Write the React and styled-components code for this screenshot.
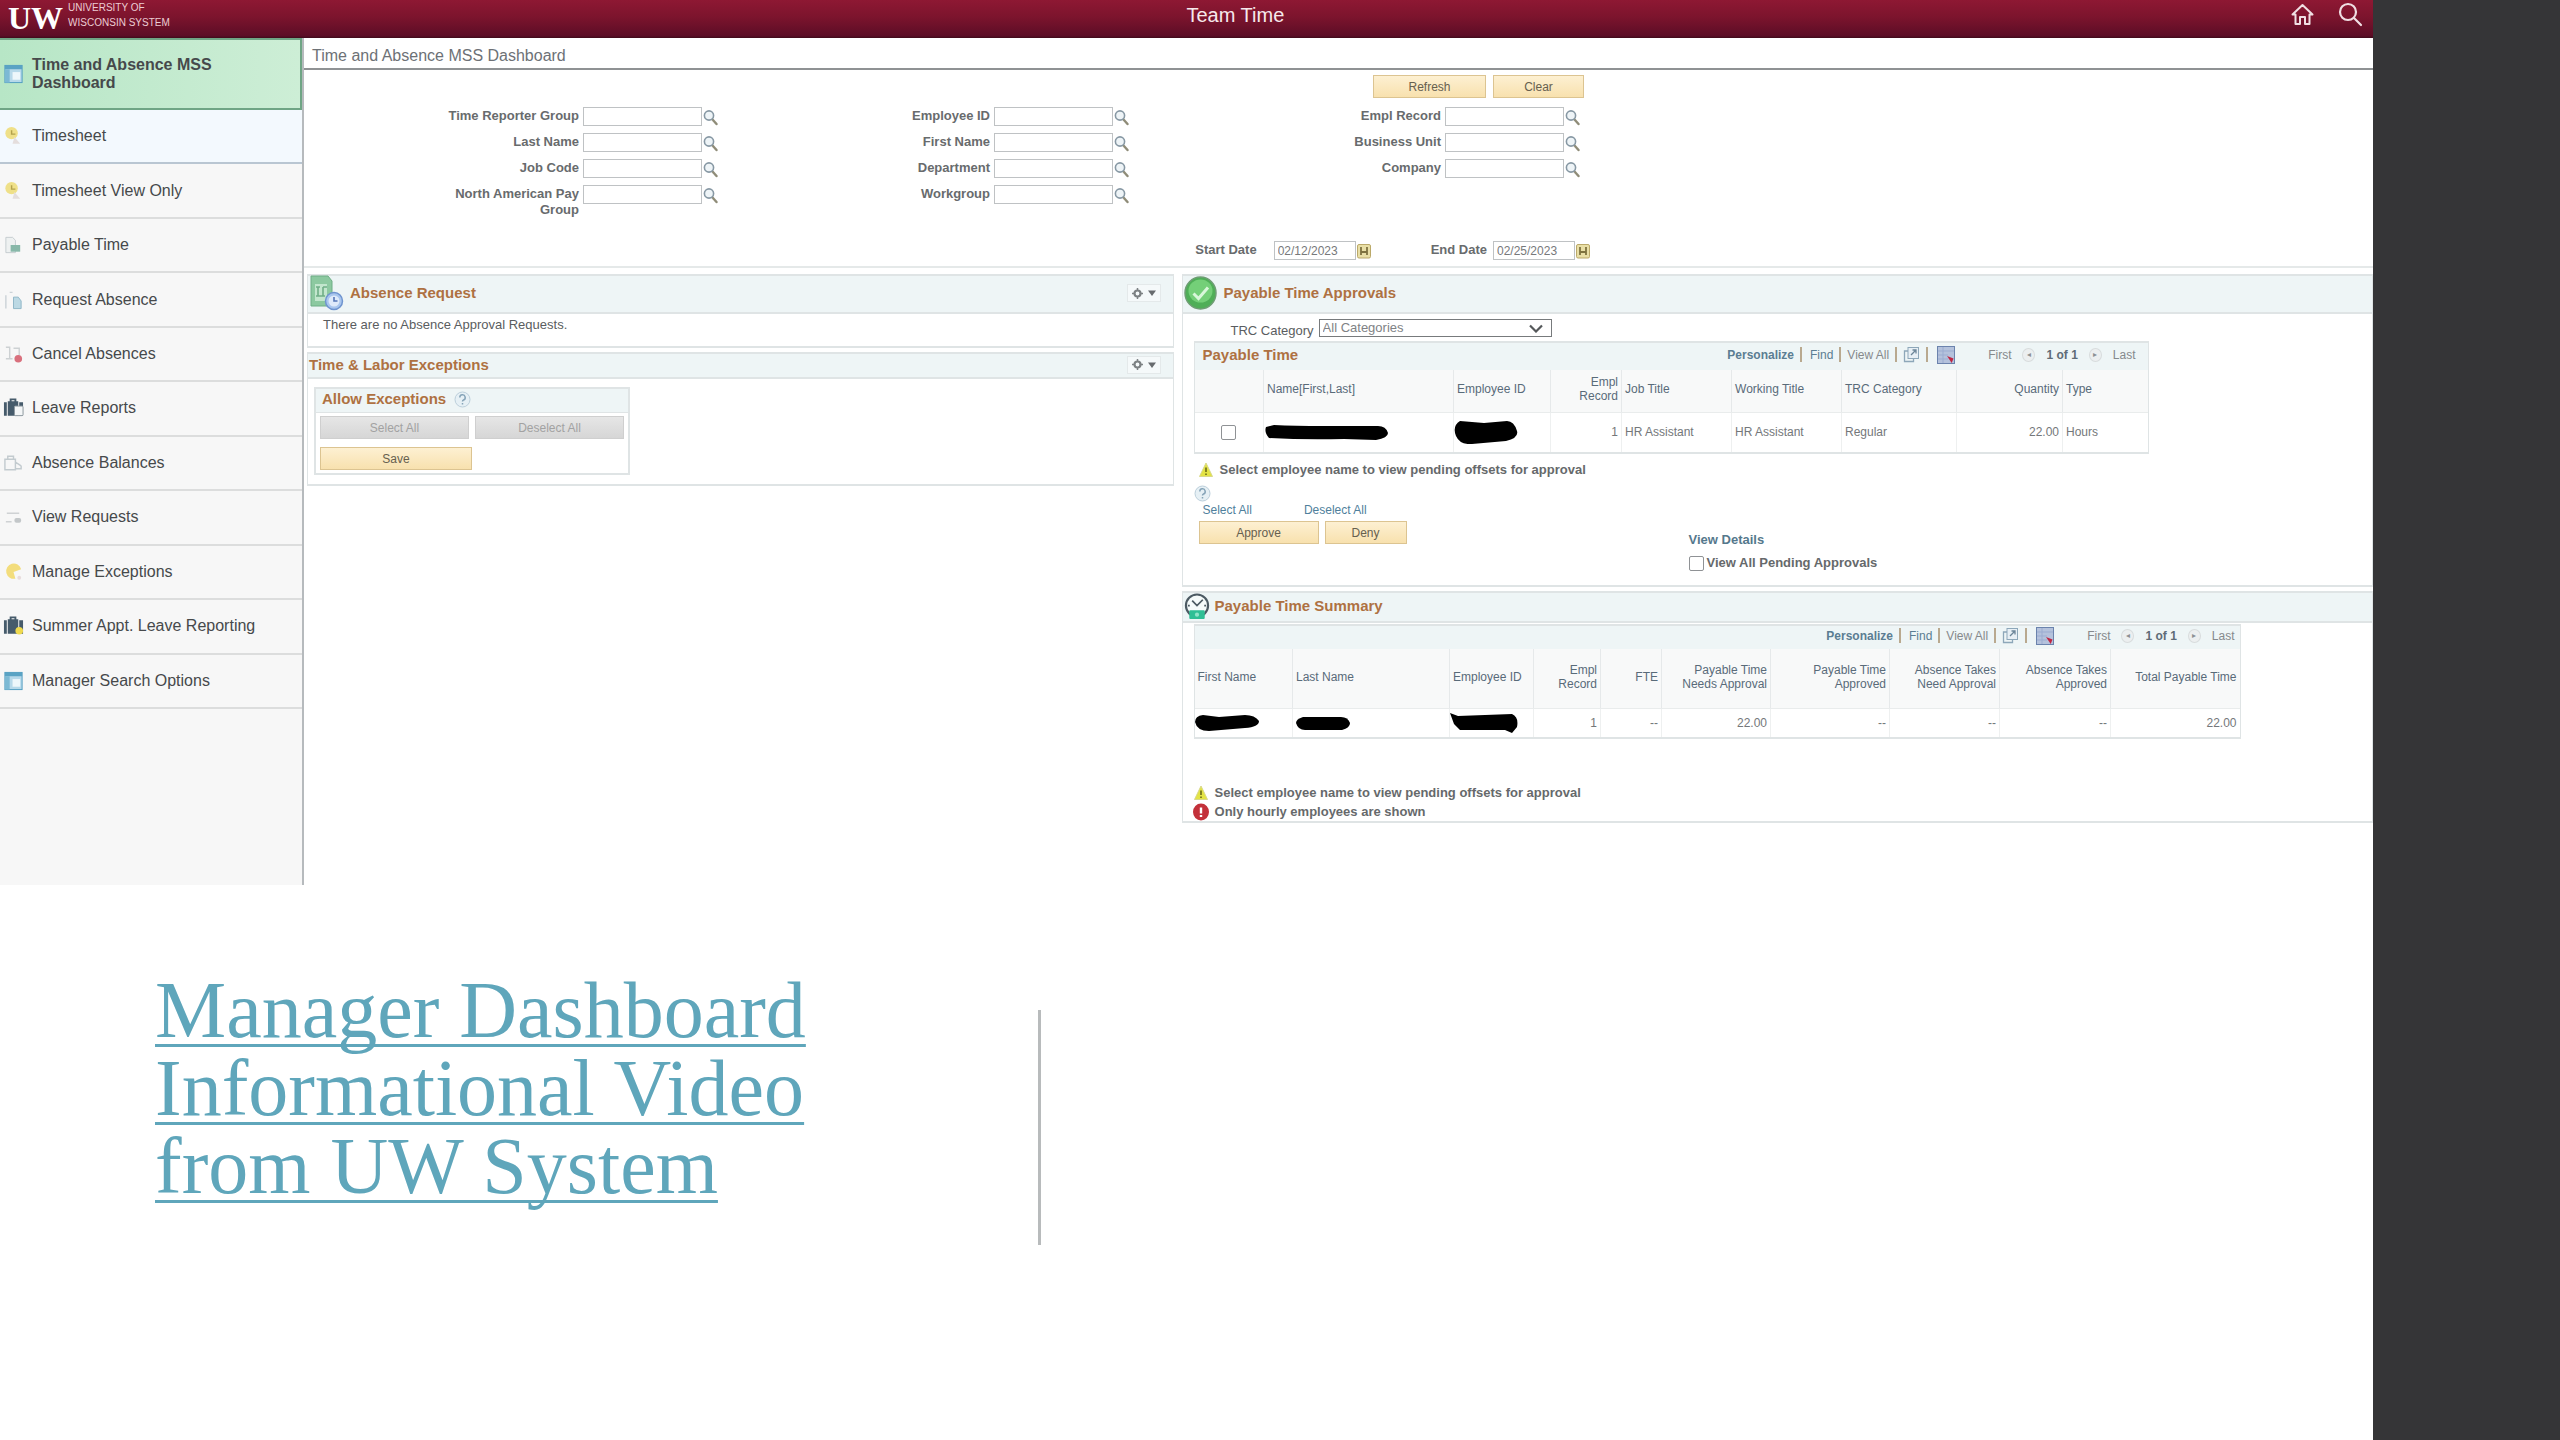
import React from "react";
import styled, { createGlobalStyle, css } from "styled-components";

const GlobalStyle = createGlobalStyle`
  *, *::before, *::after { box-sizing: border-box; }
  body {
    margin: 0;
    background: #353537;
    font-family: "Liberation Sans", Arial, sans-serif;
    font-size: 13px;
    color: #5a5d60;
  }
  button, input, select { font: inherit; color: inherit; margin: 0; }
  a { color: inherit; text-decoration: none; }
  svg { display: block; flex: none; }
`;

const line = "#dfe4e5";
const tint = "#eef5f6";

/* ---------- page frame ---------- */

const Page = styled.div`
  display: flex;
  min-height: 100vh;
  padding-right: 187px;
  background: #353537;
`;

const Slide = styled.div`
  flex: 1;
  min-width: 0;
  display: flex;
  flex-direction: column;
  background: #fff;
`;

const TopBar = styled.header`
  display: grid;
  grid-template-columns: 1fr 1fr;
  height: 38px;
  background: linear-gradient(#8e1833 0%, #7c142d 45%, #5c0d26 94%, #3f0a1b 100%);
  color: #f6e9ec;
`;

const Brand = styled.a`
  display: flex;
  align-items: flex-start;
  gap: 5px;
  padding-left: 8px;
  color: #fff;
`;

const Monogram = styled.span`
  font: bold 32px/36px "Liberation Serif", serif;
`;

const BrandName = styled.span`
  font: 10px/15px "Liberation Sans", sans-serif;
  color: #ecccd3;
`;

const BarRight = styled.div`
  display: flex;
  align-items: center;
  gap: 24px;
  padding: 0 10px 9px 0;
`;

const BarTitle = styled.h1`
  flex: 1;
  margin: 0;
  font-size: 20px;
  line-height: 24px;
  font-weight: 400;
`;

const IconButton = styled.button`
  display: flex;
  padding: 0;
  border: 0;
  background: none;
`;

const Workspace = styled.div`
  display: grid;
  grid-template-columns: 304px minmax(0, 1fr);
`;

/* ---------- side navigation ---------- */

const Sidebar = styled.nav`
  display: flex;
  flex-direction: column;
  padding-bottom: 176px;
  background: #f7f7f7;
  border-right: 2px solid #b6babd;
`;

const NavList = styled.ul`
  flex: 1;
  display: grid;
  grid-template-rows: 72px;
  grid-auto-rows: 1fr;
  margin: 0;
  padding: 0;
  list-style: none;
`;

const NavItem = styled.li`
  display: flex;
  border-bottom: 2px solid #dcdddd;
  ${(p) => p.$tone === "hover" && css`background: #f3f9fe; border-color: #b9c6d2;`}
  ${(p) => p.$tone === "active" && css`
    background: linear-gradient(90deg, #b7e6c6, #cdeed6);
    border: 2px solid #6fa585;
    border-left: 0;
    font-weight: 700;
  `}
`;

const NavLink = styled.a`
  flex: 1;
  display: flex;
  align-items: center;
  gap: 8px;
  padding: 0 40px 0 3px;
  font-size: 16px;
  line-height: 18px;
  color: #46494b;
`;

/* ---------- filter area ---------- */

const Main = styled.main`
  padding-bottom: 62px;
`;

const PageTitle = styled.h2`
  margin: 0;
  padding: 8px 8px 2px;
  border-bottom: 2px solid #8f9294;
  font-size: 16px;
  line-height: 20px;
  font-weight: 400;
  color: #6d7176;
`;

const Filters = styled.form`
  padding: 5px 0 6px;
  border-bottom: 2px solid #e5e9e9;
`;

const FilterActions = styled.div`
  display: flex;
  justify-content: flex-end;
  gap: 7px;
  width: 1280px;
`;

const FilterColumns = styled.div`
  display: grid;
  grid-template-columns: 414px 411px 451px;
  margin-top: 9px;
`;

const FieldStack = styled.div`
  display: flex;
  flex-direction: column;
  gap: 7px;
`;

const Field = styled.div`
  display: flex;
  align-items: flex-start;
  justify-content: flex-end;
  gap: 1px;
  height: 19px;
`;

const Label = styled.label`
  max-width: 136px;
  padding: 1px 3px 0 0;
  font-weight: 700;
  line-height: 16px;
  text-align: right;
  color: #686b6d;
`;

const TextBox = styled.input`
  width: ${(p) => (p.$short ? 82 : 119)}px;
  height: 19px;
  padding: 0 3px;
  border: 1px solid #bfc2c4;
  background: #fff;
  font-size: 12px;
  color: #77797b;
`;

const LookupButton = styled(IconButton)`
  padding-top: 2px;
`;

const DateRow = styled.div`
  display: flex;
  justify-content: flex-end;
  gap: 60px;
  width: 1286px;
  margin-top: 37px;
`;

const DateLabel = styled(Label)`
  padding-right: ${(p) => p.$gap}px;
`;

const Button = styled.button`
  width: ${(p) => p.$w}px;
  height: 23px;
  padding: 0;
  border: 1px solid #dcc491;
  background: linear-gradient(#fdf0d2, #f8e1ae);
  font-size: 12px;
  line-height: 20px;
  color: #66604f;
  &:disabled {
    border-color: #cfcfcf;
    background: linear-gradient(#e6e6e6, #d6d6d6);
    color: #a2a2a2;
  }
`;

/* ---------- panels ---------- */

const Panels = styled.div`
  display: grid;
  grid-template-columns: minmax(0, 8fr) minmax(0, 11fr);
  align-items: start;
  gap: 8px;
  padding: 6px 0 0 3px;
`;

const PanelColumn = styled.div`
  display: flex;
  flex-direction: column;
  gap: 4px;
`;

const Panel = styled.section`
  border: 2px solid ${line};
  border-width: 2px 1px;
`;

const PanelHead = styled.div`
  display: flex;
  align-items: center;
  gap: ${(p) => p.$gap || 0}px;
  height: ${(p) => p.$h}px;
  padding: 0 12px 2px 1px;
  border-bottom: 2px solid ${line};
  background: ${tint};
`;

const Heading = styled.h3`
  flex: 1;
  margin: 0;
  font-size: 15px;
  line-height: 20px;
  font-weight: 700;
  color: #ae7142;
`;

const GearButton = styled.button`
  display: flex;
  align-items: center;
  justify-content: center;
  gap: 5px;
  width: 34px;
  height: 18px;
  padding: 0;
  border: 1px solid #e4e9ea;
  background: #f5f9fa;
`;

const Message = styled.p`
  margin: 0;
  padding: 3px 15px 13px;
  line-height: 16px;
`;

const ExceptionsBody = styled.div`
  padding: 8px 6px 9px;
`;

const ExceptionsBox = styled.fieldset`
  display: block;
  width: 316px;
  margin: 0;
  padding: 0;
  border: 2px solid ${line};
  background: #fff;
`;

const BoxHead = styled.div`
  display: flex;
  align-items: center;
  gap: 8px;
  height: 24px;
  padding: 0 6px 3px;
  border-bottom: 1px solid ${line};
  background: ${tint};
`;

const BoxTitle = styled.h4`
  margin: 0;
  font-size: 15px;
  line-height: 20px;
  color: #ae7142;
`;

const ButtonGrid = styled.div`
  display: flex;
  flex-wrap: wrap;
  gap: 8px 6px;
  padding: 3px 4px;
`;

const ApprovalsBody = styled.div`
  padding: 5px 11px 14px;
`;

const CategoryRow = styled.div`
  display: flex;
  gap: 5px;
  height: 19px;
  padding-left: 37px;
  line-height: 24px;
`;

const SelectWrap = styled.div`
  display: grid;
  align-items: center;
  width: 233px;
  height: 18px;
  line-height: 16px;
  > * { grid-area: 1 / 1; }
  > svg { justify-self: end; margin-right: 9px; pointer-events: none; }
`;

const Select = styled.select`
  appearance: none;
  width: 100%;
  height: 18px;
  padding: 0 3px;
  border: 1px solid #777a7c;
  border-radius: 0;
  background: #fff;
  line-height: 16px;
  color: #808285;
`;

/* ---------- data grids ---------- */

const GridFrame = styled.div`
  width: ${(p) => p.$w}px;
  margin-top: ${(p) => (p.$tight ? 1 : 3)}px;
  border: 2px solid ${line};
  border-width: 2px 1px;
`;

const GridBar = styled.div`
  display: flex;
  align-items: center;
  height: ${(p) => p.$h}px;
  padding: 0 ${(p) => p.$end}px 4px 8px;
  background: ${tint};
`;

const GridTools = styled.div`
  display: flex;
  align-items: center;
  margin-left: auto;
  gap: 6px;
  font-size: 12px;
  line-height: 16px;
  color: #85898c;
`;

const ToolLink = styled.a`
  color: #5b7d92;
  font-weight: ${(p) => (p.$strong ? 700 : 400)};
`;

const Bar = styled.span`
  width: 2px;
  height: 15px;
  margin: 0 ${(p) => p.$after || 0}px 0 0;
  background: #b9a98f;
`;

const Pager = styled.div`
  display: flex;
  align-items: center;
  gap: 11px;
  margin-left: ${(p) => p.$lead}px;
  strong { color: #5f6c77; }
`;

const PageDot = styled.button`
  width: 13px;
  height: 14px;
  padding: 0;
  border: 1px solid #d8dcdd;
  border-radius: 50%;
  background: #eceff0;
  font-size: 8px;
  line-height: 10px;
  color: #8d9194;
`;

const Table = styled.table`
  width: 100%;
  table-layout: fixed;
  border-collapse: collapse;
  font-size: 12px;
  line-height: 14px;
`;

const Th = styled.th`
  height: ${(p) => p.$h}px;
  padding: 0 3px 3px;
  border-right: 1px solid #e6e9ea;
  border-bottom: 1px solid #e9ecec;
  background: #f8f9f9;
  font-weight: 400;
  text-align: ${(p) => (p.$right ? "right" : "left")};
  color: #596b79;
  &:last-child { border-right: 0; }
`;

const Td = styled.td`
  height: ${(p) => p.$h}px;
  padding: 0 ${(p) => (p.$flush ? 0 : 3)}px;
  border-right: 1px solid #eef0f0;
  text-align: ${(p) => p.$align || "left"};
  color: #74777a;
  &:last-child { border-right: 0; }
`;

const Check = styled.input`
  appearance: none;
  display: block;
  width: 15px;
  height: 15px;
  border: 1px solid #8f9295;
  border-radius: 2px;
  background: #fff;
`;

const CheckCell = styled.div`
  display: flex;
  justify-content: center;
`;

const Note = styled.p`
  display: flex;
  align-items: center;
  gap: 6px;
  height: 19px;
  margin: 0;
  font-weight: 700;
  color: #66696b;
`;

const Notes = styled.div`
  padding: ${(p) => p.$pad};
`;

const ApprovalActions = styled.div`
  display: grid;
  grid-template-columns: 495px auto;
  align-items: end;
  justify-content: start;
`;

const ActionLinks = styled.div`
  display: flex;
  gap: 52px;
  padding-left: 9px;
  font-size: 12px;
  line-height: 16px;
  color: #4f7f9c;
`;

const ActionButtons = styled.div`
  display: flex;
  gap: 6px;
  margin: 3px 0 27px 5px;
`;

const Details = styled.div`
  display: flex;
  flex-direction: column;
  gap: 7px;
  font-weight: 700;
  line-height: 16px;
`;

const DetailsTitle = styled.h4`
  margin: 0;
  font-size: 13px;
  color: #55788c;
`;

const CheckLabel = styled.label`
  display: flex;
  align-items: center;
  gap: 3px;
  color: #66696b;
`;

/* ---------- caption under the dashboard ---------- */

const Caption = styled.section`
  flex: 1;
  display: flex;
  align-items: flex-start;
  padding-left: 155px;
`;

const CaptionTitle = styled.h2`
  width: 883px;
  margin: 0;
  padding: 86px 200px 0 0;
  font: 400 80px/78px "Liberation Serif", serif;
`;

const CaptionLink = styled.a`
  color: #5fa6bb;
  text-decoration: underline;
  text-decoration-thickness: 3px;
  text-underline-offset: 7px;
  text-decoration-skip-ink: none;
`;

const Divider = styled.div`
  width: 3px;
  height: 235px;
  margin-top: 125px;
  background: #b8bbbc;
`;

/* ---------- drawings ---------- */

const Lens = () => (
  <svg width="15" height="17" viewBox="0 0 15 17" fill="none">
    <path d="M9.5 10.5 L13.5 15" stroke="#8f8c78" strokeWidth="2.4" strokeLinecap="round" />
    <circle cx="6" cy="6.5" r="4.6" fill="#eef4f7" stroke="#8798a4" strokeWidth="1.6" />
  </svg>
);

const Calendar = () => (
  <svg width="14" height="16" viewBox="0 0 14 16">
    <rect x="0.5" y="1.5" width="13" height="13.5" rx="1.5" fill="#e9dfa6" stroke="#bba969" />
    <path d="M4 4v8M10 4v8M4 9h6" stroke="#7f7340" strokeWidth="1.8" fill="none" />
  </svg>
);

const HomeIcon = () => (
  <svg width="23" height="23" viewBox="0 0 23 23" fill="none" stroke="#f0dfe3" strokeWidth="2" strokeLinejoin="round">
    <path d="M1.5 11.5 L11.5 2 L21.5 11.5 H18.5 V21 H14 V14 H9 V21 H4.500 V11.5 Z" />
  </svg>
);

const SearchIcon = () => (
  <svg width="25" height="25" viewBox="0 0 25 25" fill="none" stroke="#f0dfe3" strokeWidth="2.2" strokeLinecap="round">
    <circle cx="10" cy="10" r="8" />
    <path d="M16 16 L23 23" />
  </svg>
);

const Gear = () => (
  <svg width="11" height="11" viewBox="0 0 11 11" fill="none">
    <circle cx="5.500" cy="5.500" r="3" stroke="#7c8183" strokeWidth="2.200" />
    <path d="M5.500 0v2M5.500 9v2M0 5.500h2M9 5.500h2" stroke="#7c8183" strokeWidth="1.500" />
  </svg>
);

const Caret = () => (
  <svg width="8" height="6" viewBox="0 0 8 6"><path d="M0 0.500h8L4 6z" fill="#676b6e" /></svg>
);

const Chevron = () => (
  <svg width="14" height="9" viewBox="0 0 14 9" fill="none"><path d="M1 1.500l6 6 6-6" stroke="#55585a" strokeWidth="2.200" /></svg>
);

const Help = () => (
  <svg width="17" height="17" viewBox="0 0 17 17" fill="none">
    <circle cx="8.500" cy="8.500" r="7.500" fill="#e6f0f5" stroke="#bccfdb" />
    <path d="M5.800 6.500a2.700 2.700 0 1 1 3.700 2.500c-.7.300-1 .7-1 1.600M8.500 12v1.500" stroke="#86a4b8" strokeWidth="1.500" />
  </svg>
);

const Warning = () => (
  <svg width="16" height="16" viewBox="0 0 16 16">
    <path d="M8 1 L14.500 14.500 H1.500 Z" fill="#e3e345" stroke="#d9d98a" />
    <path d="M8 5.500v4.500M8 11.500v1.500" stroke="#77781c" strokeWidth="1.800" />
  </svg>
);

const ErrorMark = () => (
  <svg width="16" height="18" viewBox="0 0 16 18">
    <ellipse cx="8" cy="9" rx="8" ry="8.500" fill="#c3313a" />
    <path d="M8 4.500v6M8 12v2" stroke="#fff" strokeWidth="2.400" />
  </svg>
);

const AbsenceIcon = () => (
  <svg width="35" height="36" viewBox="0 0 35 36">
    <path d="M2 1h17l4 5v25H2z" fill="#8cc9a0" stroke="#6fae86" />
    <path d="M6 9h12v17H6z" fill="#c2e6cd" />
    <path d="M7 12h4M14 12h4M9 12v9M14 12v9M7 21h9" stroke="#6fae86" strokeWidth="1.600" fill="none" />
    <circle cx="25" cy="26" r="8.500" fill="#a9c6ee" stroke="#6f94cf" strokeWidth="1.500" />
    <circle cx="25" cy="26" r="5.500" fill="#dfeafa" />
    <path d="M25 22v4h3.500" stroke="#5577b8" strokeWidth="1.600" fill="none" />
  </svg>
);

const ApprovedIcon = () => (
  <svg width="33" height="34" viewBox="0 0 33 34">
    <ellipse cx="16.500" cy="17" rx="15.500" ry="16" fill="#4fae57" stroke="#6f9d74" strokeWidth="1.500" />
    <ellipse cx="16.500" cy="15" rx="12" ry="11.500" fill="#74cf78" />
    <path d="M9.500 17.500l5 5 9.500-11" fill="none" stroke="#d9f7da" strokeWidth="3" />
  </svg>
);

const SummaryIcon = () => (
  <svg width="26" height="27" viewBox="0 0 26 28">
    <circle cx="13" cy="13" r="11.500" fill="#f5fafa" stroke="#4c5a63" strokeWidth="2.200" />
    <path d="M8 8l5 5 6-6M3.500 13h2M20.500 13h2" stroke="#4c5a63" strokeWidth="1.800" fill="none" />
    <rect x="5" y="18" width="16" height="9" rx="1" fill="#2fbf95" />
    <circle cx="13" cy="22.500" r="2.200" fill="#8fe3c8" />
  </svg>
);

const PopOut = () => (
  <svg width="17" height="17" viewBox="0 0 17 17" fill="none">
    <rect x="5" y="1.500" width="10.500" height="11" fill="#e7eff5" stroke="#8da7b9" />
    <path d="M5 5H1.500v10.500h9V12.500" stroke="#8da7b9" strokeWidth="1.300" />
    <path d="M8 9l5-5M9.500 4H13v3.500" stroke="#6b8598" strokeWidth="1.300" />
  </svg>
);

const Download = () => (
  <svg width="18" height="18" viewBox="0 0 18 18">
    <rect x="0.500" y="0.500" width="17" height="17" fill="#b4c2dc" stroke="#6b83ad" />
    <path d="M1 5h16M1 9h10M1 13h10M6 1v16" stroke="#9bacd0" />
    <path d="M10 10l6.500 2.500-1.800 4.500z" fill="#c02643" />
  </svg>
);

const navDrawings = {
  board: (
    <>
      <rect x="2" y="2" width="18" height="18" fill="#b7d9ea" stroke="#4f9cc0" />
      <path d="M2 2h18v4H2z" fill="#5aa3c4" />
      <path d="M2 6h5v14H2z" fill="#7cb9d4" />
      <rect x="10" y="9" width="8" height="8" fill="#eef7fb" />
    </>
  ),
  sheet: (
    <>
      <circle cx="9" cy="8" r="6.500" fill="#efe088" />
      <path d="M9 5v4h4" stroke="#b3a24c" strokeWidth="1.500" fill="none" />
      <path d="M12 12l6 7H10z" fill="#e4dedd" />
    </>
  ),
  pay: (
    <>
      <path d="M3 3h7l3 3v13H3z" fill="#eef1f1" stroke="#c4cccf" />
      <rect x="8" y="11" width="10" height="7" fill="#88b8a9" />
    </>
  ),
  request: (
    <>
      <path d="M3 6v14M7 3h3" stroke="#ccd3d8" strokeWidth="1.500" />
      <path d="M11 8h5l3 4v8h-8z" fill="#bcd9e4" stroke="#8eb6c6" />
    </>
  ),
  cancel: (
    <>
      <path d="M3 4h4v12M3 16h7M11 5h6v7" stroke="#cdd1d3" strokeWidth="1.500" fill="none" />
      <circle cx="16" cy="16" r="4" fill="#d9707d" />
    </>
  ),
  bag: (
    <>
      <path d="M1 5h3v14H1zM5 4h11v15H5zM17 5h4v14h-4z" fill="#465b6b" />
      <path d="M8 5V2h5v3" stroke="#465b6b" strokeWidth="2" fill="none" />
      <rect x="12" y="9" width="9" height="10" rx="1" fill="#f4f6f7" stroke="#8d979e" />
    </>
  ),
  balance: (
    <path d="M2 7h11v11H2zM5 7V4h6v3M13 10l6 4M19 14v3h-6" stroke="#c3cbcf" strokeWidth="1.500" fill="none" />
  ),
  view: (
    <>
      <path d="M4 7h13M3 16h6" stroke="#cfd2d4" strokeWidth="1.500" />
      <rect x="12" y="12" width="7" height="5" rx="2" fill="#c3c7c9" />
    </>
  ),
  except: (
    <>
      <path d="M11 11L19 8A8 8 0 1 0 13 18z" fill="#f3dd7c" />
      <circle cx="17" cy="17" r="2" fill="#e8dcdc" />
    </>
  ),
  summer: (
    <>
      <path d="M1 5h3v14H1zM5 4h11v15H5zM17 5h4v14h-4z" fill="#465b6b" />
      <path d="M8 5V2h5v3" stroke="#465b6b" strokeWidth="2" fill="none" />
      <circle cx="17" cy="16" r="4" fill="#efd94e" />
    </>
  ),
};

const NavIcon = ({ kind }) => (
  <svg width="21" height="22" viewBox="0 0 22 22" fill="none">{navDrawings[kind]}</svg>
);

const Marker = ({ w, h, d }) => (
  <svg width={w} height={h} viewBox={`0 0 ${w} ${h}`} role="img" aria-label="Redacted">
    <path d={d} fill="#000" />
  </svg>
);

const marks = {
  name: <Marker w={124} h={17} d="M2 3 Q0 8 5 14 Q40 16 80 15 L112 16 Q124 14 124 9 Q122 2 114 2 L60 2 Q30 2 10 1 Z" />,
  id: <Marker w={64} h={24} d="M6 1 Q-2 6 2 16 Q6 25 18 24 L52 21 Q65 18 63 11 Q60 1 53 1 L30 3 Z" />,
  first: <Marker w={64} h={17} d="M8 1 Q0 2 0 8 Q2 17 14 17 L50 14 Q64 13 64 7 Q60 1 50 1 L24 3 Z" />,
  last: <Marker w={54} h={14} d="M7 1 Q0 3 0 7 Q2 14 9 14 L46 14 Q54 12 54 7 Q52 1 45 1 Z" />,
  id2: <Marker w={68} h={20} d="M0 0 L8 3 L62 1 Q69 4 67 14 L62 20 L55 17 L10 17 L4 11 Z" />,
};

/* ---------- content ---------- */

const navItems = [
  ["board", "Time and Absence MSS Dashboard", "active"],
  ["sheet", "Timesheet", "hover"],
  ["sheet", "Timesheet View Only"],
  ["pay", "Payable Time"],
  ["request", "Request Absence"],
  ["cancel", "Cancel Absences"],
  ["bag", "Leave Reports"],
  ["balance", "Absence Balances"],
  ["view", "View Requests"],
  ["except", "Manage Exceptions"],
  ["summer", "Summer Appt. Leave Reporting"],
  ["board", "Manager Search Options"],
];

const filterGroups = [
  ["Time Reporter Group", "Last Name", "Job Code", "North American Pay Group"],
  ["Employee ID", "First Name", "Department", "Workgroup"],
  ["Empl Record", "Business Unit", "Company"],
];

const payableColumns = [
  { w: 69, title: "" },
  { w: 190, title: "Name[First,Last]", cell: marks.name, flush: true },
  { w: 97, title: "Employee ID", cell: marks.id, flush: true },
  { w: 71, title: "Empl Record", cell: "1", right: true },
  { w: 110, title: "Job Title", cell: "HR Assistant" },
  { w: 110, title: "Working Title", cell: "HR Assistant" },
  { w: 115, title: "TRC Category", cell: "Regular" },
  { w: 106, title: "Quantity", cell: "22.00", right: true },
  { w: 85, title: "Type", cell: "Hours" },
];

const summaryColumns = [
  { w: 98, title: "First Name", cell: marks.first, flush: true },
  { w: 157, title: "Last Name", cell: marks.last },
  { w: 84, title: "Employee ID", cell: marks.id2, flush: true },
  { w: 67, title: "Empl Record", cell: "1", right: true },
  { w: 61, title: "FTE", cell: "--", right: true },
  { w: 109, title: "Payable Time Needs Approval", cell: "22.00", right: true },
  { w: 119, title: "Payable Time Approved", cell: "--", right: true },
  { w: 110, title: "Absence Takes Need Approval", cell: "--", right: true },
  { w: 111, title: "Absence Takes Approved", cell: "--", right: true },
  { w: 129, title: "Total Payable Time", cell: "22.00", right: true },
];

const slug = (text) => text.toLowerCase().replace(/[^a-z]+/g, "-");

function LookupField({ label }) {
  const id = slug(label);
  return (
    <Field>
      <Label htmlFor={id}>{label}</Label>
      <TextBox id={id} />
      <LookupButton type="button" aria-label={`Look up ${label}`}><Lens /></LookupButton>
    </Field>
  );
}

function DateField({ label, value, gap }) {
  const id = slug(label);
  return (
    <Field>
      <DateLabel htmlFor={id} $gap={gap}>{label}</DateLabel>
      <TextBox id={id} defaultValue={value} $short />
      <LookupButton type="button" aria-label={`Choose ${label}`}><Calendar /></LookupButton>
    </Field>
  );
}

function Tools() {
  return (
    <GridTools>
      <ToolLink href="#personalize" $strong>Personalize</ToolLink>
      <Bar $after={2} />
      <ToolLink href="#find">Find</ToolLink>
      <Bar />
      <span>View All</span>
      <Bar />
      <PopOut />
      <Bar $after={3} />
      <Download />
      <Pager $lead={27}>
        <span>First</span>
        <PageDot type="button" aria-label="Previous">◂</PageDot>
        <strong>1 of 1</strong>
        <PageDot type="button" aria-label="Next">▸</PageDot>
        <span>Last</span>
      </Pager>
    </GridTools>
  );
}

function DataGrid({ columns, headHeight, rowHeight }) {
  return (
    <Table>
      <colgroup>{columns.map((c) => <col key={c.title} style={{ width: c.w }} />)}</colgroup>
      <thead>
        <tr>{columns.map((c) => <Th key={c.title} $h={headHeight} $right={c.right}>{c.title}</Th>)}</tr>
      </thead>
      <tbody>
        <tr>
          {columns.map((c) => (
            <Td key={c.title} $h={rowHeight} $flush={c.flush} $align={c.right ? "right" : "left"}>
              {c.title ? c.cell : <CheckCell><Check type="checkbox" aria-label="Select row" /></CheckCell>}
            </Td>
          ))}
        </tr>
      </tbody>
    </Table>
  );
}

const Gears = ({ label }) => (
  <GearButton type="button" aria-label={label}><Gear /><Caret /></GearButton>
);

const pendingNote = "Select employee name to view pending offsets for approval";

export default function App() {
  return (
    <Page>
      <GlobalStyle />
      <Slide>
        <TopBar>
          <Brand href="#home">
            <Monogram>UW</Monogram>
            <BrandName>UNIVERSITY OF<br />WISCONSIN SYSTEM</BrandName>
          </Brand>
          <BarRight>
            <BarTitle>Team Time</BarTitle>
            <IconButton aria-label="Home"><HomeIcon /></IconButton>
            <IconButton aria-label="Search"><SearchIcon /></IconButton>
          </BarRight>
        </TopBar>
        <Workspace>
          <Sidebar>
            <NavList>
              {navItems.map(([kind, text, tone]) => (
                <NavItem key={text} $tone={tone}>
                  <NavLink href={`#${slug(text)}`}><NavIcon kind={kind} />{text}</NavLink>
                </NavItem>
              ))}
            </NavList>
          </Sidebar>
          <Main>
            <PageTitle>Time and Absence MSS Dashboard</PageTitle>
            <Filters>
              <FilterActions>
                <Button type="button" $w={113}>Refresh</Button>
                <Button type="button" $w={91}>Clear</Button>
              </FilterActions>
              <FilterColumns>
                {filterGroups.map((group) => (
                  <FieldStack key={group[0]}>
                    {group.map((label) => <LookupField key={label} label={label} />)}
                  </FieldStack>
                ))}
              </FilterColumns>
              <DateRow>
                <DateField label="Start Date" value="02/12/2023" gap={16} />
                <DateField label="End Date" value="02/25/2023" gap={5} />
              </DateRow>
            </Filters>
            <Panels>
              <PanelColumn>
                <Panel>
                  <PanelHead $h={38} $gap={6}>
                    <AbsenceIcon />
                    <Heading>Absence Request</Heading>
                    <Gears label="Absence Request options" />
                  </PanelHead>
                  <Message>There are no Absence Approval Requests.</Message>
                </Panel>
                <Panel>
                  <PanelHead $h={25}>
                    <Heading>Time &amp; Labor Exceptions</Heading>
                    <Gears label="Exceptions options" />
                  </PanelHead>
                  <ExceptionsBody>
                    <ExceptionsBox aria-label="Allow Exceptions">
                      <BoxHead><BoxTitle>Allow Exceptions</BoxTitle><Help /></BoxHead>
                      <ButtonGrid>
                        <Button type="button" $w={149} disabled>Select All</Button>
                        <Button type="button" $w={149} disabled>Deselect All</Button>
                        <Button type="button" $w={152}>Save</Button>
                      </ButtonGrid>
                    </ExceptionsBox>
                  </ExceptionsBody>
                </Panel>
              </PanelColumn>
              <PanelColumn>
                <Panel>
                  <PanelHead $h={38} $gap={7}>
                    <ApprovedIcon />
                    <Heading>Payable Time Approvals</Heading>
                  </PanelHead>
                  <ApprovalsBody>
                    <CategoryRow>
                      <label htmlFor="trc">TRC Category</label>
                      <SelectWrap>
                        <Select id="trc"><option>All Categories</option></Select>
                        <Chevron />
                      </SelectWrap>
                    </CategoryRow>
                    <GridFrame $w={955}>
                      <GridBar $h={27} $end={12}>
                        <BoxTitle>Payable Time</BoxTitle>
                        <Tools />
                      </GridBar>
                      <DataGrid columns={payableColumns} headHeight={42} rowHeight={40} />
                    </GridFrame>
                    <Notes $pad="6px 0 6px 4px">
                      <Note><Warning />{pendingNote}</Note>
                    </Notes>
                    <ApprovalActions>
                      <div>
                        <Help />
                        <ActionLinks>
                          <a href="#select-all">Select All</a>
                          <a href="#deselect-all">Deselect All</a>
                        </ActionLinks>
                        <ActionButtons>
                          <Button type="button" $w={120}>Approve</Button>
                          <Button type="button" $w={82}>Deny</Button>
                        </ActionButtons>
                      </div>
                      <Details>
                        <DetailsTitle>View Details</DetailsTitle>
                        <CheckLabel><Check type="checkbox" />View All Pending Approvals</CheckLabel>
                      </Details>
                    </ApprovalActions>
                  </ApprovalsBody>
                </Panel>
                <Panel>
                  <PanelHead $h={30} $gap={5}>
                    <SummaryIcon />
                    <Heading>Payable Time Summary</Heading>
                  </PanelHead>
                  <Notes $pad="0 11px">
                    <GridFrame $w={1047} $tight>
                      <GridBar $h={23} $end={5}>
                        <Tools />
                      </GridBar>
                      <DataGrid columns={summaryColumns} headHeight={59} rowHeight={29} />
                    </GridFrame>
                  </Notes>
                  <Notes $pad="44px 10px 0">
                    <Note><Warning />{pendingNote}</Note>
                    <Note><ErrorMark />Only hourly employees are shown</Note>
                  </Notes>
                </Panel>
              </PanelColumn>
            </Panels>
          </Main>
        </Workspace>
        <Caption>
          <CaptionTitle>
            <CaptionLink href="#video">Manager Dashboard Informational Video from UW System</CaptionLink>
          </CaptionTitle>
          <Divider />
        </Caption>
      </Slide>
    </Page>
  );
}
